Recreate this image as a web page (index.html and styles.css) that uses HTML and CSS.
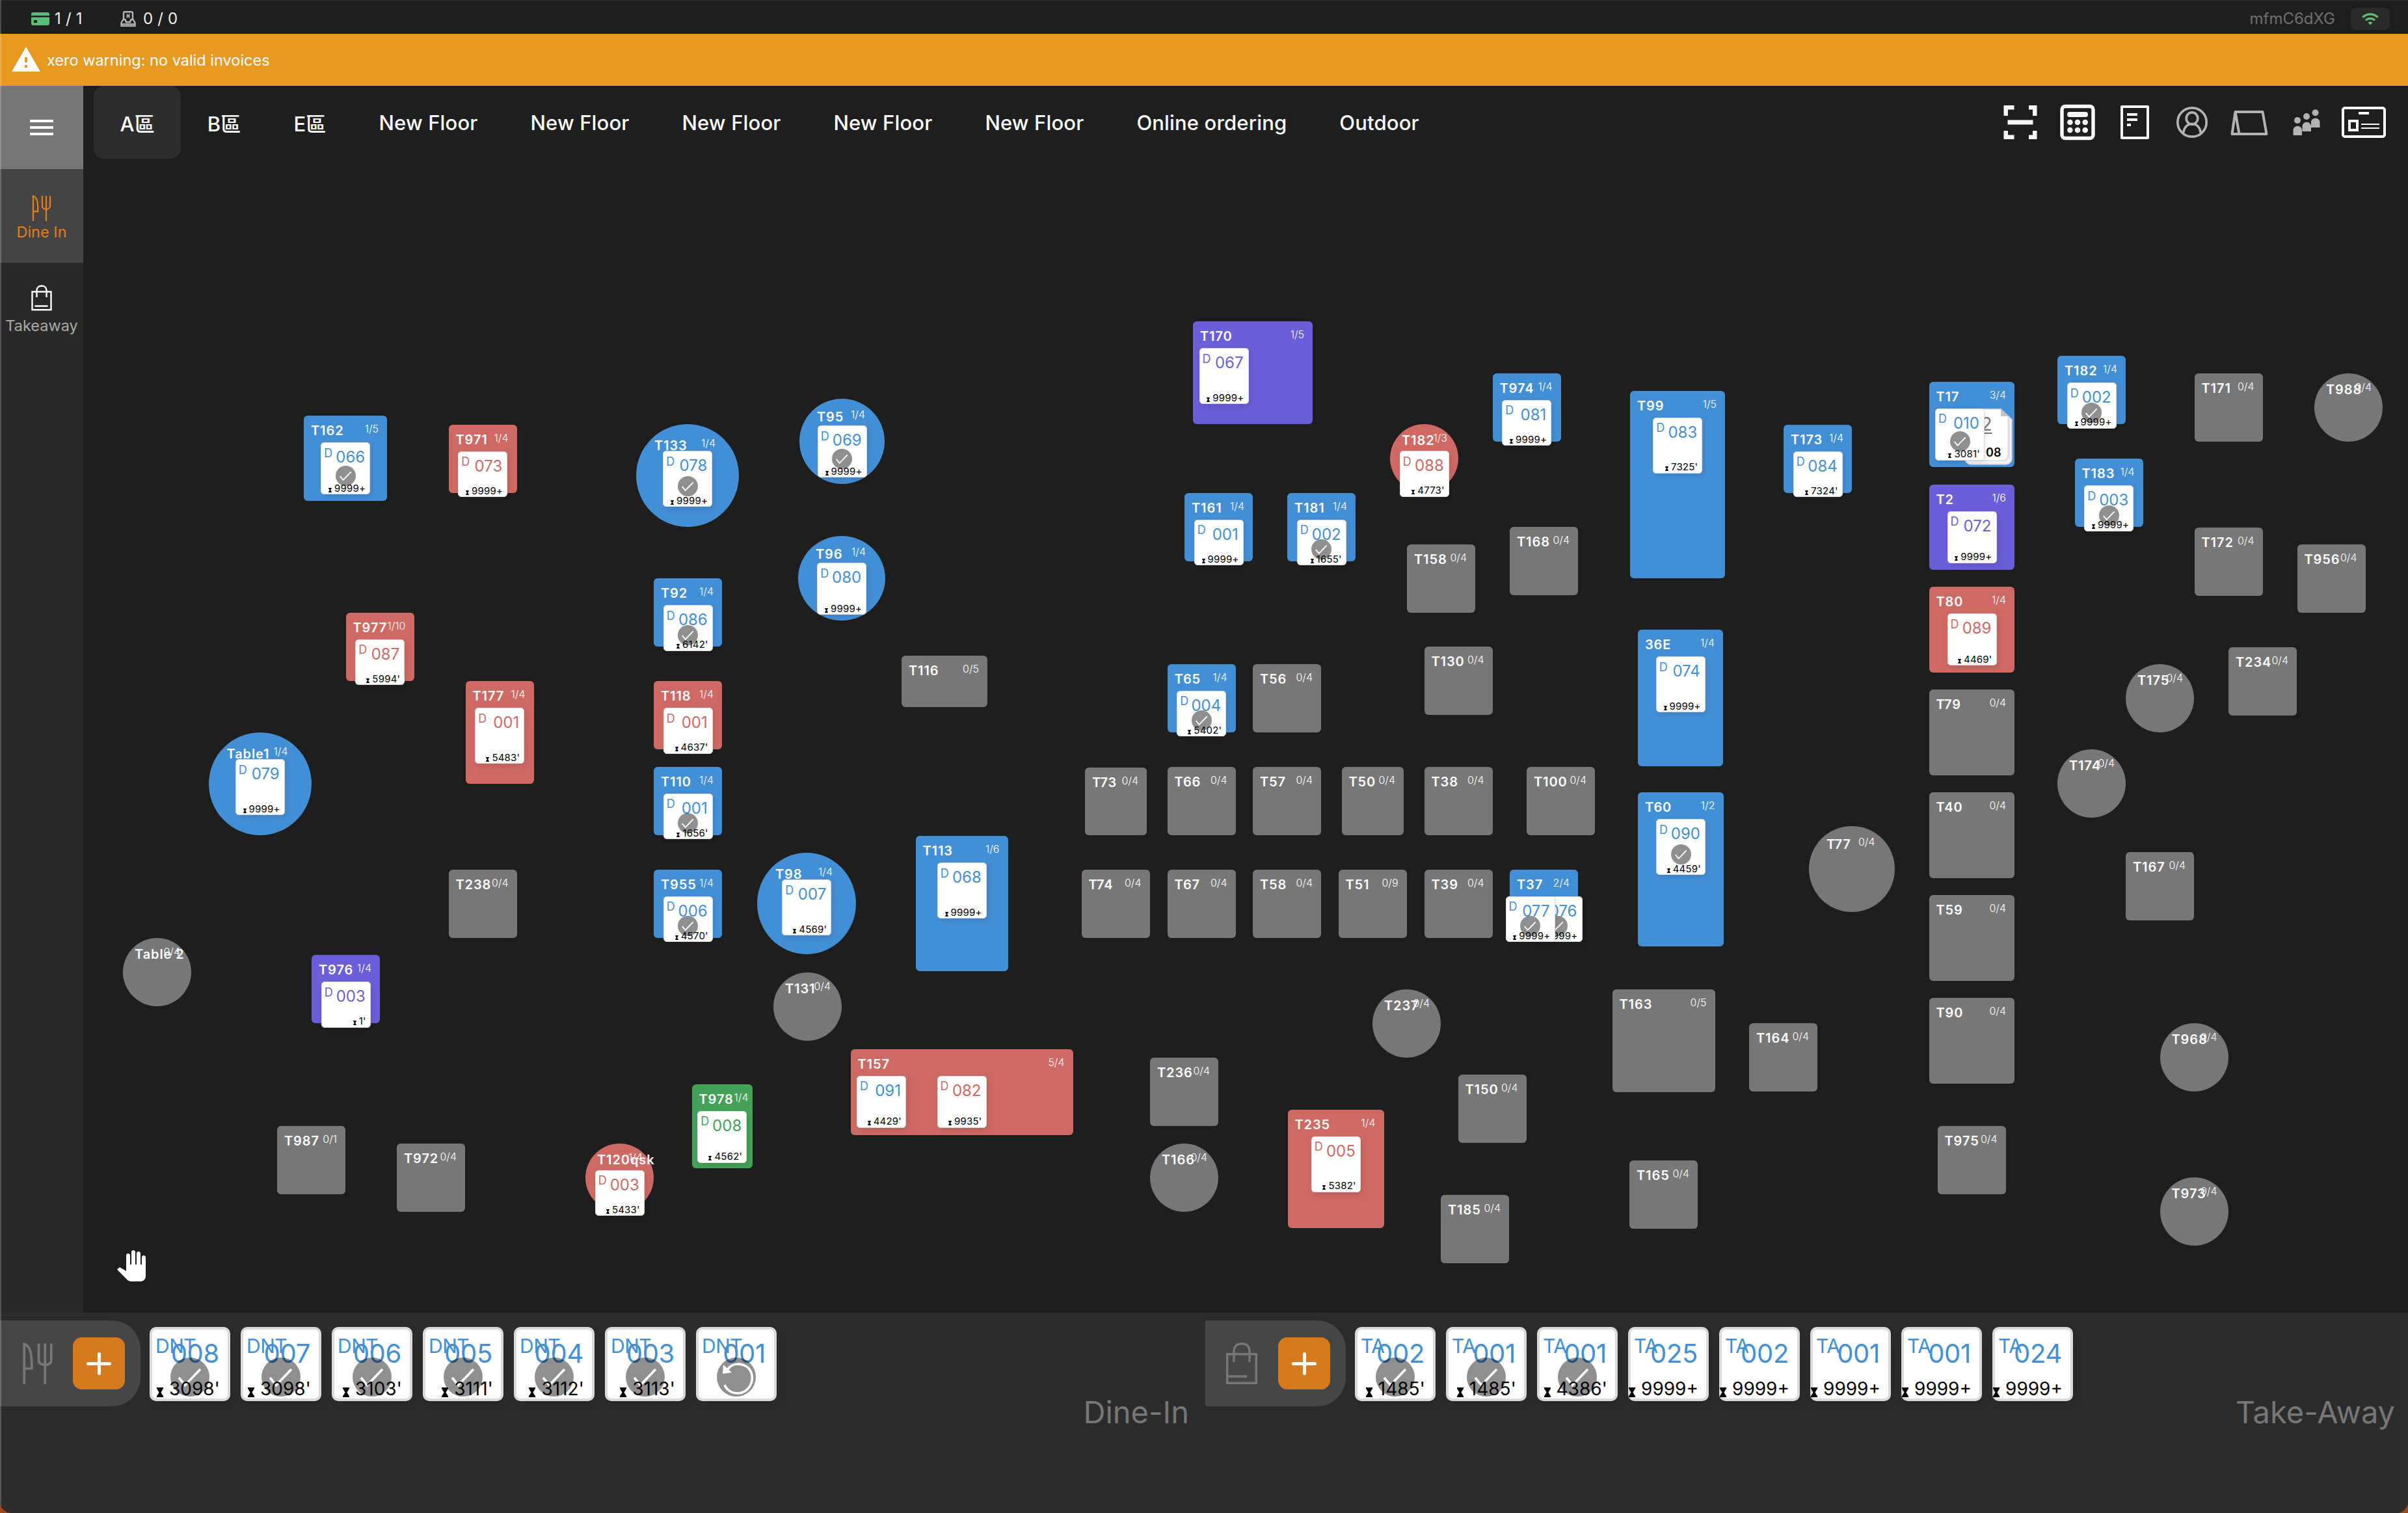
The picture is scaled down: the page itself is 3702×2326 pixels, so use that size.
FILE: index.html
```html
<!DOCTYPE html>
<html lang="en">
<head>
<meta charset="utf-8">
<title>Floor plan</title>
<link rel="stylesheet" href="styles.css">
</head>
<body>
<svg class="symbols" aria-hidden="true">
  <symbol id="cutlery" viewBox="0 0 30 40" fill="none" stroke="currentColor" stroke-width="2.3">
    <path d="M2 40V1.5C8 3 9.3 10 9.3 25H2"/><path d="M16 1v16c0 6 12 6 12 0V1M22 1v39"/>
  </symbol>
  <symbol id="bag" viewBox="0 0 32 40" fill="none" stroke="currentColor" stroke-width="2.4">
    <path d="M1.5 10.5h29V38.300h-29z"/><path d="M8.500 19V8.500c0-4.500 3-7 7.500-7s7.500 2.500 7.500 7V19M5.500 32.500h20"/>
  </symbol>
  <symbol id="bag-large" viewBox="0 0 48 64" fill="none" stroke="currentColor" stroke-width="3.400">
    <path d="M1.700 17.700h44.600v44.600H1.700z"/><path d="M12 30V14C12 6 16 1.700 24 1.700S36 6 36 14v16M2 52h30"/>
  </symbol>
  <symbol id="check" viewBox="0 0 60 60"><circle cx="30" cy="30" r="30" fill="#000" fill-opacity=".44"/><path d="M13 31l9.500 11.500L46 18" fill="none" stroke="#fff" stroke-width="3.600"/></symbol>
  <symbol id="undo" viewBox="0 0 60 60"><circle cx="30" cy="30" r="30" fill="#000" fill-opacity=".44"/><path d="M16 19C25 5 47 8 53 23c5 14-4 31-20 32-10 0-18-5-21-13" fill="none" stroke="#fff" stroke-width="3.600"/><path d="M10 11l-1 14 14-2z" fill="#fff"/></symbol>
  <symbol id="hourglass" viewBox="0 0 10 15"><path d="M0 0h10v2.500H9C9 5 6.500 6 6.500 7.500S9 10 9 12.500h1V15H0v-2.500h1C1 10 3.500 9 3.500 7.500S1 5 1 2.500H0z"/></symbol>
</svg>
<div class="app">
  <header class="status">
    <div class="status-group">
      <svg class="card-icon" viewBox="0 0 28 20"><path fill="#5bbd77" d="M3 0h22a3 3 0 0 1 3 3v2H0V3a3 3 0 0 1 3-3zM0 7.500h28V17a3 3 0 0 1-3 3H3a3 3 0 0 1-3-3zM4 12v4h5v-4z"/></svg>
      <span>1 / 1</span>
    </div>
    <div class="status-group printer">
      <svg class="printer-icon" viewBox="0 0 24 24" fill="none" stroke="#b5b5b5" stroke-width="2.400"><path d="M5 14V3c0-1 .5-1.800 1.500-1.800h11c1 0 1.500.8 1.500 1.800v11M4.500 13h3l1.500 4h6l1.500-4h3l3 5v4.800h-21V18z"/><path d="M9.500 5l5 5m0-5l-5 5M2 20h20" stroke-width="1.800"/></svg>
      <span>0 / 0</span>
    </div>
    <span class="device">mfmC6dXG</span>
    <div class="wifi"><svg viewBox="0 0 24 24"><path fill="#5bbd77" d="M1 9l2 2c4.970-4.970 13.030-4.970 18 0l2-2C16.930 2.930 7.080 2.930 1 9zm8 8l3 3 3-3c-1.650-1.660-4.340-1.660-6 0zm-4-4l2 2c2.760-2.760 7.240-2.760 10 0l2-2C15.140 9.140 8.870 9.140 5 13z"/></svg></div>
  </header>
  <div class="warning">
    <svg viewBox="0 0 24 24"><path fill="#fff" d="M1 21h22L12 2 1 21zm12-3h-2v-2h2v2zm0-4h-2v-4h2v4z"/></svg>
    <span>xero warning: no valid invoices</span>
  </div>
  <div class="middle">
    <nav class="sidebar">
      <button class="menu"><svg viewBox="0 0 24 24"><path fill="#fff" d="M3 18h18v-2H3v2zm0-5h18v-2H3v2zm0-7v2h18V6H3z"/></svg></button>
      <button class="side-item active"><svg class="side-cutlery"><use href="#cutlery"/></svg><span>Dine In</span></button>
      <button class="side-item"><svg class="side-bag"><use href="#bag"/></svg><span>Takeaway</span></button>
    </nav>
    <main class="main">
      <div class="topbar">
        <div class="tabs">
          <button class="tab selected">A區</button><button class="tab">B區</button><button class="tab">E區</button>
          <button class="tab">New Floor</button><button class="tab">New Floor</button><button class="tab">New Floor</button>
          <button class="tab">New Floor</button><button class="tab">New Floor</button><button class="tab">Online ordering</button><button class="tab">Outdoor</button>
        </div>
        <div class="tools">
          <svg viewBox="0 0 88 88" fill="#f7f7f7"><path d="M18.500 18h16v6.500H25V34h-6.500zM69.500 18h-12.500v6.500h6V34h6.500zM18.500 70h16v-6.500H25V57h-6.500zM69.500 70h-12.500v-6.500h6V57h6.500zM24.500 40.500h39v7h-39z"/></svg>
          <svg viewBox="0 0 88 88" fill="#f7f7f7"><rect x="20" y="19.500" width="48" height="49" rx="5" fill="none" stroke="#f7f7f7" stroke-width="5.400"/><rect x="28" y="28" width="32" height="8" rx="4"/><circle cx="32.400" cy="44" r="4.300"/><circle cx="44" cy="44" r="4.300"/><circle cx="55.700" cy="44" r="4.300"/><circle cx="32.400" cy="56" r="4.300"/><circle cx="44" cy="56" r="4.300"/><circle cx="55.700" cy="56" r="4.300"/></svg>
          <svg viewBox="0 0 88 88" fill="#f7f7f7"><rect x="24" y="20" width="40" height="48" fill="none" stroke="#f7f7f7" stroke-width="4" stroke-linejoin="round"/><path d="M32 30h16v4H32zM32 38h16v4H32zM32 46h6v4h-6z"/></svg>
          <svg viewBox="0 0 88 88" fill="none" stroke="#b3b3b3" stroke-width="3.700"><circle cx="44" cy="44" r="22.200"/><ellipse cx="44" cy="38" rx="8.800" ry="9.200"/><path d="M30.500 62C31 53 36 46.500 44 46.500S57 53 57.500 62"/></svg>
          <svg viewBox="0 0 88 88" fill="none" stroke="#b3b3b3" stroke-width="4" stroke-linejoin="round"><path d="M22.500 28h42l6 34h-53zM22.500 28l6 34"/></svg>
          <svg viewBox="0 0 88 88" fill="#b3b3b3"><circle cx="30" cy="41" r="5"/><circle cx="44" cy="35" r="5"/><circle cx="57.600" cy="29.300" r="5"/><path d="M23.500 64v-7.500c0-9 13.500-9 13.500 0V64zM37.500 58v-7.500c0-9 13.500-9 13.500 0V58zM51 52v-7.500c0-9 13.500-9 13.500 0V52z"/></svg>
          <svg viewBox="0 0 88 88" fill="none" stroke="#fff" stroke-width="4"><rect x="12" y="22" width="64" height="44" rx="3"/><path d="M36 30h16M22 42h12v14H22z"/><path d="M40 47h28M40 53h28" stroke-width="2"/></svg>
        </div>
      </div>
      <section class="floor" id="floor">
        <svg class="pan-tool" viewBox="0 0 24 24"><path fill="#fff" d="M23 5.500V20c0 2.200-1.800 4-4 4h-7.300c-1.080 0-2.100-.43-2.850-1.190L1 14.830s1.260-1.230 1.300-1.250c.22-.19.49-.29.79-.29.22 0 .42.06.6.16.04.01 4.310 2.460 4.310 2.460V4c0-.83.67-1.500 1.500-1.500S11 3.170 11 4v7h1V1.500c0-.83.67-1.500 1.500-1.500S15 .67 15 1.500V11h1V2.500c0-.83.67-1.500 1.500-1.500s1.500.67 1.500 1.500V11h1V5.500c0-.83.67-1.500 1.500-1.500s1.500.67 1.500 1.500z"/></svg>
      </section>
    </main>
  </div>
  <footer class="queues">
    <section class="queue">
      <div class="queue-row"><div class="queue-head"><svg class="queue-cutlery"><use href="#cutlery"/></svg><button class="add"></button></div><div class="cards" id="dine-in"></div></div>
      <div class="queue-name">Dine-In</div>
    </section>
    <section class="queue">
      <div class="queue-row"><div class="queue-head"><svg class="queue-bag"><use href="#bag-large"/></svg><button class="add"></button></div><div class="cards" id="take-away"></div></div>
      <div class="queue-name">Take-Away</div>
    </section>
  </footer>
</div>
<script src="app.js"></script>
</body>
</html>
```
FILE: styles.css
```css
* { box-sizing: border-box; }
html { background: #9a4a1c; }
body { margin: 0; font-family: Inter, "Noto Sans CJK TC", sans-serif; color: #fff; }
button { border: 0; padding: 0; margin: 0; background: none; color: inherit; font: inherit; }
svg { display: block; flex: none; }
.symbols { position: absolute; width: 0; height: 0; }

.app {
  position: relative;
  width: 3702px;
  height: 2326px;
  display: flex;
  flex-direction: column;
  overflow: hidden;
  background: #1e1e1e;
  border-radius: 0 0 18px 18px;
}
/* thin highlight along the window edge */
.app::after { content: ""; position: absolute; inset: 0 auto 0 0; width: 2px; background: rgba(255, 255, 255, .2); }

/* status bar */
.status {
  height: 52px;
  flex: none;
  display: flex;
  align-items: center;
  padding: 3px 28px 0 48px;
  border-top: 2px solid #28282e;
  font-size: 24px;
  color: #f0f0f0;
}
.status-group { display: flex; align-items: center; gap: 8px; width: 137px; letter-spacing: .2px; }
.card-icon { width: 28px; height: 20px; }
.printer-icon { width: 24px; height: 24px; }
.status-group.printer { gap: 11px; }
.device { margin-left: auto; color: #6f6f6f; }
.wifi { width: 60px; height: 34px; margin-left: 24px; border-radius: 8px; background: #2a2a2a; display: flex; align-items: center; justify-content: center; }
.wifi svg { width: 28px; height: 28px; }

.warning {
  height: 80px;
  flex: none;
  display: flex;
  align-items: center;
  gap: 8px;
  padding-left: 16px;
  background: #e8991f;
  font-size: 23.500px;
}
.warning svg { width: 48px; height: 48px; }

/* sidebar */
.middle { height: 1886px; flex: none; display: flex; }
.sidebar { width: 128px; background: #292929; display: flex; flex-direction: column; }
.menu { height: 128px; background: #767676; display: flex; align-items: center; justify-content: center; }
.menu svg { width: 48px; height: 48px; }
.side-item { height: 144px; display: flex; flex-direction: column; align-items: center; padding-top: 34px; font-size: 23.500px; line-height: 28px; color: #aaa; }
.side-item.active { background: #444; color: #e37d18; padding-top: 40px; }
.side-item span { margin-top: 9px; }
.side-item.active span { margin-top: 3px; }
.side-cutlery { width: 30px; height: 40px; }
.side-bag { width: 32px; height: 40px; color: #fff; }

/* floor tabs and tools */
.main { flex: 1; display: flex; flex-direction: column; }
.topbar { height: 128px; display: flex; justify-content: space-between; padding: 0 24px 0 16px; }
.tabs { display: flex; }
.tab { height: 112px; padding: 0 40.500px; border-radius: 16px; font-size: 31px; font-weight: 500; letter-spacing: .15px; }
.tab.selected { background: #2d2d2d; }
.tools { display: flex; height: 112px; align-items: center; }
.tools svg { width: 88px; height: 88px; }

/* floor plan */
.floor { position: relative; flex: 1; }
.pan-tool { position: absolute; left: 50px; bottom: 48px; width: 48px; height: 48px; }
.table {
  position: absolute;
  border-radius: 6px;
  background: #777;
}
.table.round { border-radius: 50%; }
.table.blue { background: #438fd6; }
.table.red { background: #cf6963; }
.table.purple { background: #6a5fd8; }
.table.green { background: #43a257; }
.table-head { display: grid; padding: 11px 13px 0 11px; line-height: 24px; white-space: nowrap; }
.table-name { grid-area: 1 / 1; justify-self: start; width: 0; font-size: 20px; font-weight: 600; letter-spacing: .9px; }
.table-seats { grid-area: 1 / 1; justify-self: end; margin-top: -3px; font-size: 16px; font-weight: 300; }
.narrow .table-head { padding-right: 6px; }
.round .table-head { padding: 13px 17px 0 18px; }
.round .table-seats { margin-top: -4px; }
.round.medium .table-head { padding: 16px 30px 0 27px; }
.round.large .table-head { padding: 21px 36px 0 28px; }

/* order tickets */
.ticket {
  position: absolute;
  top: 41px;
  width: 76px;
  display: grid;
  border: 1.500px solid #dcdcdc;
  border-radius: 5px;
  background: #fff;
  box-shadow: 3px 4px 8px rgba(0, 0, 0, .09);
}
.ticket > * { grid-area: 1 / 1; }
.ticket.blue, .card { color: #438fd6; }
.ticket.red { color: #cf6963; }
.ticket.purple { color: #6a5fd8; }
.ticket.green { color: #43a257; }
.prefix { justify-self: start; align-self: start; margin: 6.500px 0 0 4px; font-size: 18px; line-height: 1; }
.number { justify-self: end; align-self: start; margin: 10px 7px 0 0; font-size: 24px; line-height: 1; }
.badge { place-self: center; width: 31px; height: 31px; margin-top: 22px; }
.time { justify-self: end; align-self: end; display: flex; align-items: flex-end; gap: 4px; margin: 0 6px 1.500px 0; color: #000; font-size: 15px; line-height: 1; letter-spacing: .2px; }
.time svg { width: 5px; height: 7px; margin-bottom: 1px; }

/* stacked receipts behind a ticket */
.stack { position: absolute; left: 54px; top: 41px; width: 74px; height: 87px; }
.stack svg { position: absolute; inset: 0; width: 74px; height: 87px; }
.stack-top, .stack-bottom { position: absolute; line-height: 1; }
.stack-top { right: 31px; top: 10px; font-size: 28px; color: #777; text-decoration: underline; text-underline-offset: 3px; text-decoration-thickness: 2px; }
.stack-bottom { right: 17px; top: 59px; font-size: 18px; font-weight: 600; color: #000; }

/* bottom queues */
.queues { height: 308px; display: flex; background: #2c2c2c; }
.queue { flex: none; width: 1853px; padding-top: 12px; }
.queue-row { display: flex; height: 132px; gap: 14px; }
.queue-head { width: 216px; height: 132px; padding: 0 24px 0 34px; display: flex; align-items: center; justify-content: space-between; background: #464646; border-radius: 0 44px 44px 0; color: #777; }
.queue-cutlery { width: 48px; height: 64px; }
.queue-bag { width: 48px; height: 64px; margin-left: -2px; }
.add { width: 80px; height: 80px; border-radius: 14px; display: grid; place-items: center; background: #d57a1f; }
.add::before, .add::after { content: ""; grid-area: 1 / 1; background: #fff; border-radius: 3px; }
.add::before { width: 38px; height: 5px; }
.add::after { width: 5px; height: 35px; }
.cards { display: flex; gap: 16px; padding-top: 10px; }
.card { width: 124px; height: 114px; display: grid; border: 4px solid #dadada; border-radius: 10px; background: #fff; box-shadow: 6px 8px 14px rgba(0, 0, 0, .1); }
.card > * { grid-area: 1 / 1; }
.card .prefix { margin: 10px 0 0 5px; font-size: 30px; letter-spacing: -.5px; }
.card .number { margin: 17px 13px 0 0; font-size: 40px; letter-spacing: -.3px; }
.card .badge { width: 60px; height: 60px; margin-top: 40px; }
.card .time { margin: 0 12px 1px -10px; font-size: 28px; gap: 9px; letter-spacing: 0; }
.card .time svg { width: 10px; height: 15px; }
.queue-name { margin: -20px 0 0; padding-right: 25px; text-align: right; font-size: 47px; line-height: 58px; color: #777; }
.queue:last-child { width: 1849px; }
.queue:last-child .queue-name { padding-right: 20px; }
```
FILE: app.js
```js
// Screen position of the floor canvas; table coordinates are stored in screen units.
const ORIGIN = { x: 128, y: 260 };

// name, seats, x, y, width, height, tickets, round
// ticket: [colour, number, time, done, left offset]
const S = 105;
const tables = [
  ["T162", "1/5", 467, 639, 128, 131, [["blue", "066", "9999+", 1]]],
  ["T971", "1/4", 689.5, 652.5, S, S, [["red", "073", "9999+"]]],
  ["T133", "1/4", 978, 652, 158, 158, [["blue", "078", "9999+", 1]], 1],
  ["T95", "1/4", 1229, 613, 131, 131, [["blue", "069", "9999+", 1]], 1],
  ["T96", "1/4", 1227, 824, 134, 130, [["blue", "080", "9999+"]], 1],
  ["T92", "1/4", 1005, 889, S, S, [["blue", "086", "6142'", 1]]],
  ["T977", "1/10", 531.5, 941.5, S, S, [["red", "087", "5994'"]]],
  ["T177", "1/4", 715.5, 1047, S, 158, [["red", "001", "5483'"]]],
  ["T118", "1/4", 1005, 1047, S, S, [["red", "001", "4637'"]]],
  ["Table1", "1/4", 320.5, 1126, 158, 158, [["blue", "079", "9999+"]], 1],
  ["T110", "1/4", 1005, 1178.5, S, S, [["blue", "001", "1656'", 1]]],
  ["T238", "0/4", 689.5, 1336.5, S, S],
  ["T955", "1/4", 1005, 1336.5, S, S, [["blue", "006", "4570'", 1]]],
  ["T98", "1/4", 1164, 1311, 152, 156, [["blue", "007", "4569'"]], 1],
  ["T113", "1/6", 1407.5, 1285, 142, 208, [["blue", "068", "9999+"]]],
  ["T976", "1/4", 479, 1468, S, S, [["purple", "003", "1'"]]],
  ["T131", "0/4", 1189, 1494.5, S, S, [], 1],
  ["T157", "5/4", 1307.5, 1612.5, 342, 132, [["blue", "091", "4429'", 0, 9.5], ["red", "082", "9935'", 0, 133]]],
  ["T978", "1/4", 1063.5, 1666.5, 93, 129, [["green", "008", "4562'"]]],
  ["T987", "0/1", 426, 1731, S, S],
  ["T972", "0/4", 610, 1757.5, S, S],
  ["T120qsk", "1/4", 900, 1757.5, S, S, [["red", "003", "5433'"]], 1],
  ["Table 2", "0/4", 189, 1441.5, S, S, [], 1],
  ["T116", "0/5", 1386, 1007.5, 132, 79],
  ["T170", "1/5", 1834, 494, 184, 158, [["purple", "067", "9999+", 0, 9.5]]],
  ["T182", "1/3", 2137, 652, S, S, [["red", "088", "4773'"]], 1],
  ["T974", "1/4", 2294.5, 573.5, S, S, [["blue", "081", "9999+"]]],
  ["T99", "1/5", 2506, 600.5, 146, 288, [["blue", "083", "7325'"]]],
  ["T161", "1/4", 1821, 757.5, S, S, [["blue", "001", "9999+"]]],
  ["T181", "1/4", 1979, 757.5, S, S, [["blue", "002", "1655'", 1]]],
  ["T158", "0/4", 2163, 836.5, S, S],
  ["T168", "0/4", 2321, 810, S, S],
  ["T130", "0/4", 2189.5, 994, S, S],
  ["T65", "1/4", 1794.5, 1020.5, S, S, [["blue", "004", "5402'", 1]]],
  ["T56", "0/4", 1926, 1020.5, S, S],
  ["36E", "1/4", 2518, 968, 131, 210, [["blue", "074", "9999+"]]],
  ["T173", "1/4", 2742, 652.5, S, S, [["blue", "084", "7324'"]]],
  ["T17", "3/4", 2965.5, 586.5, 131.5, 131.5, [["blue", "010", "3081'", 1, 9.5]]],
  ["T2", "1/6", 2965.5, 744.5, 131.5, 131.5, [["purple", "072", "9999+"]]],
  ["T80", "1/4", 2965.5, 902, 131.5, 131.5, [["red", "089", "4469'"]]],
  ["T79", "0/4", 2965.5, 1060, 131.5, 131.5],
  ["T40", "0/4", 2965.5, 1218, 131.5, 131.5],
  ["T59", "0/4", 2965.5, 1376, 131.5, 131.5],
  ["T90", "0/4", 2965.5, 1534, 131.5, 131.5],
  ["T182", "1/4", 3163, 547, S, S, [["blue", "002", "9999+", 1]]],
  ["T183", "1/4", 3189.5, 705, S, S, [["blue", "003", "9999+", 1]]],
  ["T171", "0/4", 3373.5, 573.5, S, S],
  ["T988", "0/4", 3558, 573.5, S, S, [], 1],
  ["T172", "0/4", 3373.5, 810.5, S, S],
  ["T956", "0/4", 3531.5, 836.5, S, S],
  ["T175", "0/4", 3268, 1021, S, S, [], 1],
  ["T234", "0/4", 3426, 994.5, S, S],
  ["T174", "0/4", 3163, 1152, S, S, [], 1],
  ["T73", "0/4", 1668, 1179.5, 95, 104],
  ["T66", "0/4", 1794.5, 1178.5, S, S],
  ["T57", "0/4", 1926, 1178.5, S, S],
  ["T50", "0/4", 2062.5, 1178.5, 95.5, S],
  ["T38", "0/4", 2189.5, 1178.5, S, S],
  ["T100", "0/4", 2347, 1178.5, S, S],
  ["T74", "0/4", 1662.5, 1336.5, S, S],
  ["T67", "0/4", 1794.5, 1336.5, S, S],
  ["T58", "0/4", 1926, 1336.5, S, S],
  ["T51", "0/9", 2057.5, 1336.5, S, S],
  ["T39", "0/4", 2189.5, 1336.5, S, S],
  ["T37", "2/4", 2321, 1336.5, S, S, [["blue", "076", "9999+", 1, 35.5], ["blue", "077", "9999+", 1, -6.5]]],
  ["T60", "1/2", 2518, 1218, 131.5, 237, [["blue", "090", "4459'", 1]]],
  ["T237", "0/4", 2110, 1520.5, S, S, [], 1],
  ["T163", "0/5", 2478.5, 1520.5, 158, 158],
  ["T236", "0/4", 1768, 1626, S, S],
  ["T166", "0/4", 1768, 1757.5, S, S, [], 1],
  ["T150", "0/4", 2241.5, 1652, S, S],
  ["T235", "1/4", 1979.5, 1705.5, 148, 182.5, [["red", "005", "5382'"]]],
  ["T185", "0/4", 2215, 1836.5, S, S],
  ["T165", "0/4", 2505, 1784, S, S],
  ["T77", "0/4", 2781, 1270, 131.5, 132, [], 1],
  ["T167", "0/4", 3268, 1310, S, S],
  ["T164", "0/4", 2689, 1573, S, S],
  ["T968", "0/4", 3320.5, 1573, S, S, [], 1],
  ["T975", "0/4", 2978.5, 1731, S, S],
  ["T973", "0/4", 3320.5, 1810, S, S, [], 1],
];

const stack = `<div class="stack"><svg viewBox="0 0 74 87">
  <path d="M4 1h52l17 16v60a9 9 0 0 1-9 9H10a9 9 0 0 1-9-9V4z" fill="#f4f3fb" stroke="#cfcde0" stroke-width="1.500"/>
  <path d="M4 1h52l14 14v58a8 8 0 0 1-8 8H10a9 9 0 0 1-9-9V4z" fill="#e4e2f0"/>
  <path d="M3 1h53l11 11v59a9 9 0 0 1-9 9H3z" fill="#fff" stroke="#d5d5d5"/>
  <path d="M56 0l17 16v1l-6-5H56z" fill="#c4c4c4"/></svg>
  <span class="stack-top">2</span><span class="stack-bottom">08</span></div>`;

function ticketBody(prefix, number, time, badge) {
  return `<span class="prefix">${prefix}</span><span class="number">${number}</span>`
    + (badge ? `<svg class="badge"><use href="#${badge}"/></svg>` : "")
    + (time ? `<span class="time"><svg><use href="#hourglass"/></svg>${time}</span>` : "");
}

function tableMarkup([name, seats, x, y, w, h, tickets = [], round]) {
  const size = round ? (w > 140 ? " large" : w > 110 ? " medium" : "") : w < 95 ? " narrow" : "";
  const colour = tickets.length ? " " + (name === "T157" ? "red" : tickets[0][0]) : "";
  const height = h <= 110 ? 70.5 : h < 140 ? 80 : 86;
  const body = tickets.map(([tone, number, time, done, left = (w - 75.5) / 2]) =>
    `<div class="ticket ${tone}" style="left:${left}px;height:${height}px">${ticketBody("D", number, time, done && "check")}</div>`).join("");
  return `<div class="table${round ? " round" : ""}${size}${colour}" style="left:${x - ORIGIN.x}px;top:${y - ORIGIN.y}px;width:${w}px;height:${h}px">`
    + `<div class="table-head"><span class="table-name">${name}</span><span class="table-seats">${seats}</span></div>`
    + (name === "T17" ? stack : "") + body + "</div>";
}

const cards = (prefix, list) => list.map(([number, time, badge]) =>
  `<div class="card">${ticketBody(prefix, number, time, badge)}</div>`).join("");

document.getElementById("floor").insertAdjacentHTML("afterbegin", tables.map(tableMarkup).join(""));
document.getElementById("dine-in").innerHTML = cards("DNT", [
  ["008", "3098'", "check"], ["007", "3098'", "check"], ["006", "3103'", "check"], ["005", "3111'", "check"],
  ["004", "3112'", "check"], ["003", "3113'", "check"], ["001", "", "undo"],
]);
document.getElementById("take-away").innerHTML = cards("TA", [
  ["002", "1485'", "check"], ["001", "1485'", "check"], ["001", "4386'", "check"], ["025", "9999+"],
  ["002", "9999+"], ["001", "9999+"], ["001", "9999+"], ["024", "9999+"],
]);
```
